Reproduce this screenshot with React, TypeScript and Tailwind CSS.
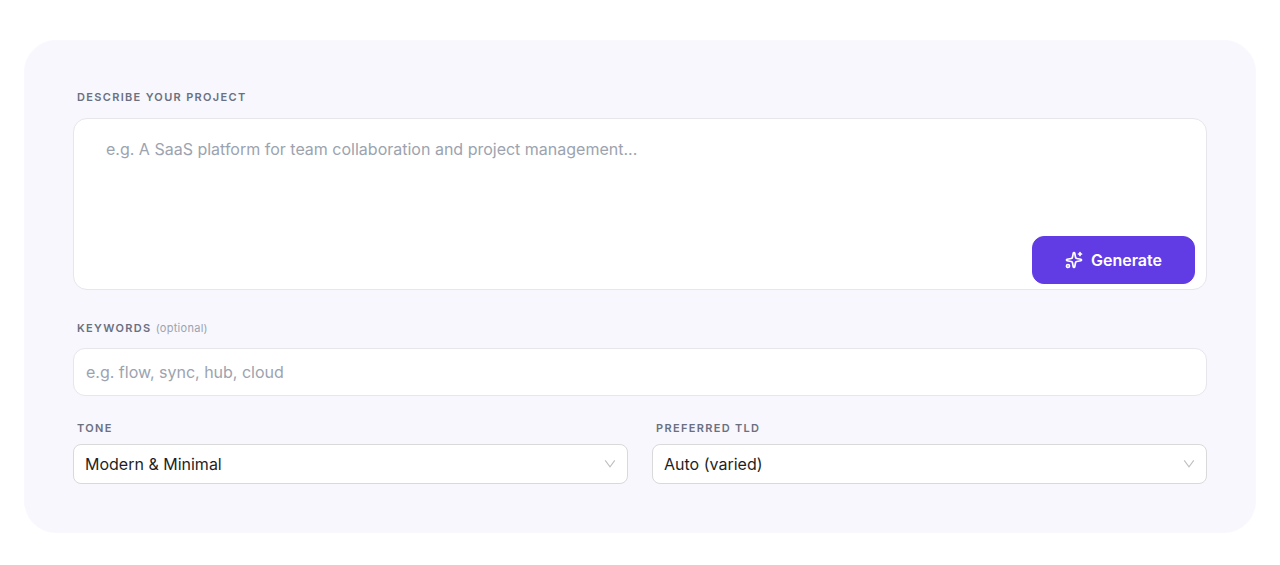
import React from 'react'
import { Sparkles } from 'lucide-react'

const labelClass = 'block px-1 text-[11px] leading-4 font-semibold uppercase tracking-[0.12em] text-[#6b7080]'

function Select({ id, label, options }: { id: string; label: string; options: string[] }) {
    return (
        <div>
            <label htmlFor={id} className={labelClass}>{label}</label>
            <div className="relative mt-2">
                <select id={id} className="block w-full h-10 appearance-none rounded-lg border border-[#d9d9d9] bg-white pl-[11px] pr-8 text-base text-[#1f1f1f] outline-none">
                    {options.map((option) => (
                        <option key={option}>{option}</option>
                    ))}
                </select>
                <svg viewBox="0 0 12 12" className="pointer-events-none absolute right-3 top-[14px] size-3" fill="none" stroke="#bfbfbf" strokeWidth="1.1">
                    <path d="M1.2 2.4 6 8.8l4.8-6.4" />
                </svg>
            </div>
        </div>
    )
}

export default function App() {
    return (
        <main className="px-6 py-10 font-[Inter,sans-serif]">
            <form className="rounded-[32px] border border-[#f9f8fd] bg-[#f7f7fd] p-12" onSubmit={(e) => e.preventDefault()}>
                <label htmlFor="description" className={labelClass}>Describe your project</label>
                <div className="relative mt-[13px]">
                    <textarea id="description" className="block w-full h-[172px] resize-none rounded-[14px] border border-[#e5e7eb] bg-white px-8 py-[18px] text-base text-[#1f1f1f] outline-none placeholder:text-[#9ca3af]" placeholder="e.g. A SaaS platform for team collaboration and project management..." />
                    <button type="submit" className="absolute bottom-[6px] right-3 flex h-12 items-center gap-2 rounded-xl border border-[#613be4] bg-[#613be4] px-8 text-base font-semibold text-white">
                        <Sparkles size={18} strokeWidth={2.25} />
                        Generate
                    </button>
                </div>

                <div className="mt-[30px]">
                    <label htmlFor="keywords" className={labelClass}>
                        Keywords <span className="font-normal normal-case tracking-wide text-[#9ca3af]">(optional)</span>
                    </label>
                    <input type="text" id="keywords" className="mt-3 block w-full h-12 rounded-xl border border-[#e5e7eb] bg-white px-3 text-base text-[#1f1f1f] outline-none placeholder:text-[#9ca3af]" placeholder="e.g. flow, sync, hub, cloud" />
                </div>

                <div className="mt-6 grid grid-cols-2 gap-6">
                    <Select id="tone" label="Tone" options={['Modern & Minimal', 'Playful', 'Professional']} />
                    <Select id="tld" label="Preferred TLD" options={['Auto (varied)', '.com', '.io']} />
                </div>
            </form>
        </main>
    )
}
